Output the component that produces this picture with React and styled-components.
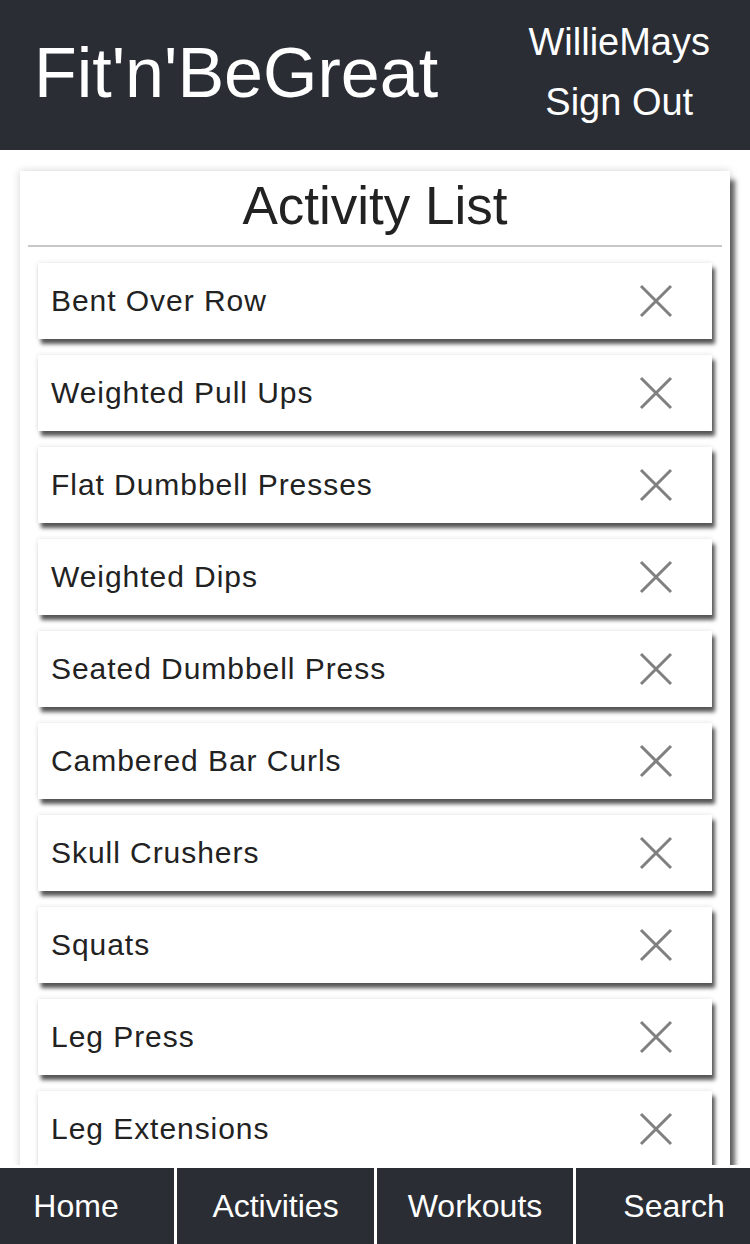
import styled, {createGlobalStyle} from 'styled-components'

const activities = [
  'Bent Over Row',
  'Weighted Pull Ups',
  'Flat Dumbbell Presses',
  'Weighted Dips',
  'Seated Dumbbell Press',
  'Cambered Bar Curls',
  'Skull Crushers',
  'Squats',
  'Leg Press',
  'Leg Extensions',
]

// edge tabs are narrower, text sits off-centre like the original
const tabs = [
  {label: 'Home', width: 174, shift: -22},
  {label: 'Activities', width: 197, shift: 0},
  {label: 'Workouts', width: 196, shift: 0},
  {label: 'Search', width: 174, shift: 22},
]

export default function App() {
  return (
    <Page>
      <GlobalStyle />
      <Header>
        <Brand>Fit'n'BeGreat</Brand>
        <UserBox>
          <UserLink>WillieMays</UserLink>
          <UserLink>Sign Out</UserLink>
        </UserBox>
      </Header>
      <Main>
        <Card>
          <CardTitle>Activity List</CardTitle>
          <Divider />
          <List>
            {activities.map(name => (
              <Item key={name}>
                <ItemName>{name}</ItemName>
                <RemoveIcon />
              </Item>
            ))}
          </List>
        </Card>
      </Main>
      <Footer>
        {tabs.map(t => (
          <Tab key={t.label} $width={t.width} $shift={t.shift}>{t.label}</Tab>
        ))}
      </Footer>
    </Page>
  )
}

function RemoveIcon() {
  return (
    <IconWrap>
      <svg width="34" height="34" viewBox="0 0 34 34">
        <path d="M2 2 L32 32 M32 2 L2 32" stroke="#808080" strokeWidth="3" fill="none" />
      </svg>
    </IconWrap>
  )
}

const GlobalStyle = createGlobalStyle`
  html, body {
    margin: 0;
    padding: 0;
    background: #fff;
  }
  body {
    font-family: "Liberation Sans", Arial, sans-serif;
  }
`

const Page = styled.div`
  height: 100vh;
  display: flex;
  flex-direction: column;
  overflow: hidden;
`

const Header = styled.header`
  height: 150px;
  flex-shrink: 0;
  background: #2a2d34;
  color: #fff;
  display: flex;
  align-items: center;
  justify-content: space-between;
  padding: 0 40px 0 34px;
`

const Brand = styled.h1`
  margin: -4px 0 0;
  font-size: 70px;
  font-weight: 400;
`

const UserBox = styled.div`
  display: flex;
  flex-direction: column;
  align-items: center;
  margin-top: -6px;
`

const UserLink = styled.span`
  font-size: 38px;
  line-height: 60px;
`

const Main = styled.main`
  flex: 1;
  overflow: hidden;
  padding: 21px 20px 0;
`

const Card = styled.section`
  background: #fff;
  padding: 0 8px 40px;
  box-shadow: 0 0 8px rgba(0, 0, 0, 0.18), 6px 8px 5px -1px rgba(0, 0, 0, 0.6);
`

const CardTitle = styled.h2`
  margin: 0;
  height: 74px;
  line-height: 70px;
  text-align: center;
  font-size: 53px;
  font-weight: 400;
  color: #222;
`

const Divider = styled.hr`
  margin: 0;
  border: none;
  height: 2px;
  background: #c8c8c8;
`

const List = styled.ul`
  list-style: none;
  margin: 0;
  padding: 16px 10px 0;
  display: flex;
  flex-direction: column;
  gap: 16px;
`

const Item = styled.li`
  height: 76px;
  background: #fff;
  display: flex;
  align-items: center;
  justify-content: space-between;
  padding: 0 39px 0 13px;
  box-shadow: 0 0 5px rgba(0, 0, 0, 0.12), 3px 5px 4px rgba(0, 0, 0, 0.65);
`

const ItemName = styled.span`
  font-size: 30px;
  letter-spacing: 0.95px;
  color: #222;
`

const IconWrap = styled.span`
  display: flex;
  width: 34px;
  height: 34px;
`

const Footer = styled.nav`
  height: 76px;
  flex-shrink: 0;
  display: flex;
  gap: 3px;
  padding-top: 3px;
  background: #fff;
`

const Tab = styled.div`
  flex: 0 0 ${p => p.$width}px;
  background: #2a2d34;
  color: #fff;
  font-size: 32px;
  display: flex;
  align-items: center;
  justify-content: center;
  padding-left: ${p => Math.max(p.$shift, 0)}px;
  padding-right: ${p => Math.max(-p.$shift, 0)}px;
  box-sizing: border-box;
`
